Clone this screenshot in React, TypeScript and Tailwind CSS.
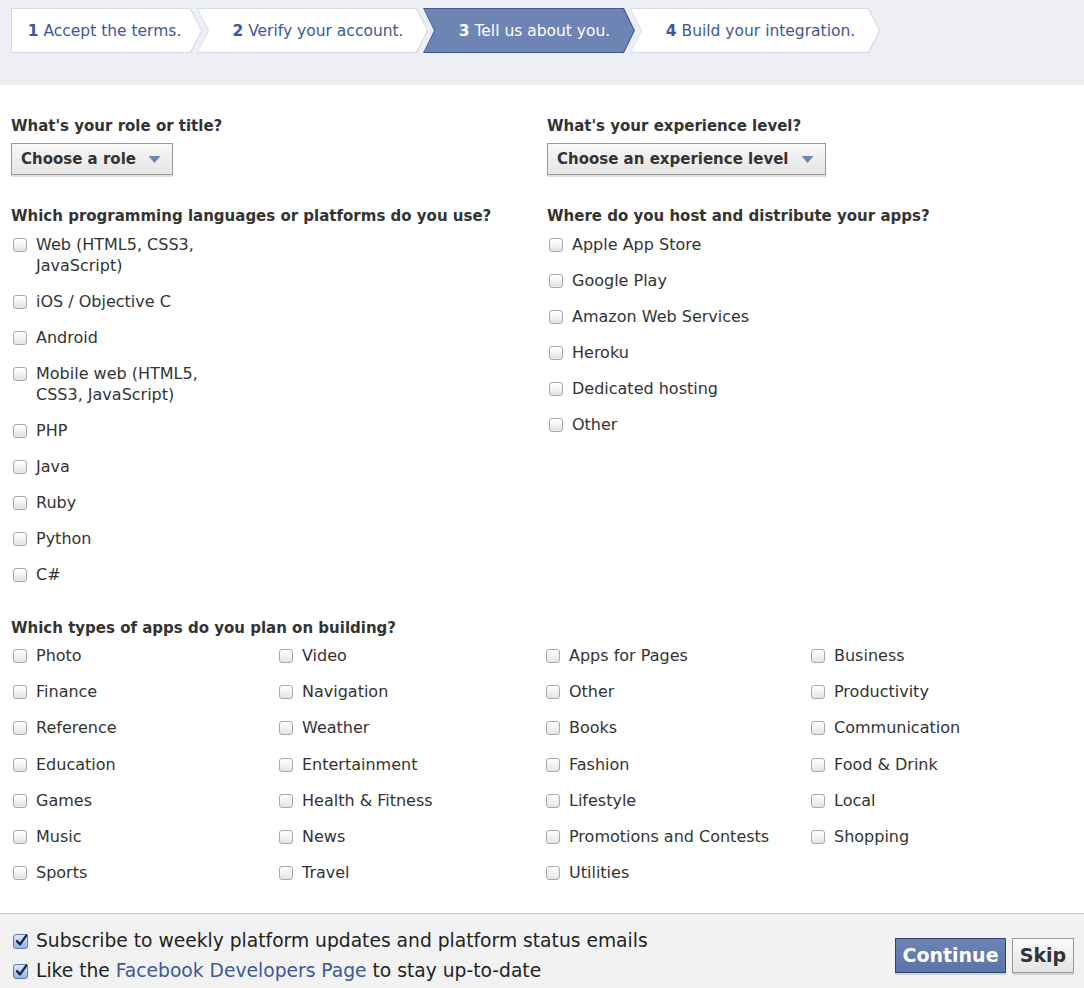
const font = "font-['DejaVu_Sans',sans-serif]";

const steps = [
  { n: "1", label: "Accept the terms.", w: "w-[191px]", first: true },
  { n: "2", label: "Verify your account.", w: "w-[231px]" },
  { n: "3", label: "Tell us about you.", w: "w-[212px]", active: true },
  { n: "4", label: "Build your integration.", w: "w-[250px]" },
];

const languages = [
  "Web (HTML5, CSS3, JavaScript)",
  "iOS / Objective C",
  "Android",
  "Mobile web (HTML5, CSS3, JavaScript)",
  "PHP",
  "Java",
  "Ruby",
  "Python",
  "C#",
];

const hosts = [
  "Apple App Store",
  "Google Play",
  "Amazon Web Services",
  "Heroku",
  "Dedicated hosting",
  "Other",
];

const appTypes = [
  "Photo", "Video", "Apps for Pages", "Business",
  "Finance", "Navigation", "Other", "Productivity",
  "Reference", "Weather", "Books", "Communication",
  "Education", "Entertainment", "Fashion", "Food & Drink",
  "Games", "Health & Fitness", "Lifestyle", "Local",
  "Music", "News", "Promotions and Contests", "Shopping",
  "Sports", "Travel", "Utilities",
];

function Step({ n, label, w, first, active }: { n: string; label: string; w: string; first?: boolean; active?: boolean }) {
  const shape = first
    ? "[clip-path:polygon(0_0,calc(100%-11px)_0,100%_50%,calc(100%-11px)_100%,0_100%)]"
    : "[clip-path:polygon(0_0,calc(100%-11px)_0,100%_50%,calc(100%-11px)_100%,0_100%,11px_50%)]";
  return (
    <div className={`${w} h-[45px] p-px ${shape} ${active ? "bg-[#3b5998]" : "bg-[#d4dbe8]"} ${first ? "" : "-ml-[5px]"}`}>
      <div
        className={`flex h-full items-center justify-center pt-[3px] ${first ? "pr-[4px]" : "pl-[11px]"} ${shape} ${
          active ? "bg-[#6d84b4] text-white" : "bg-white text-[#3b5998]"
        } text-[15.5px]`}
      >
        <span className="font-bold">{n}</span>
        <span>&nbsp;{label}</span>
      </div>
    </div>
  );
}

function Box() {
  return (
    <span className="mt-[4px] h-[14px] w-[14px] shrink-0 rounded-[3px] border border-[#a9a9a9] bg-gradient-to-b from-white to-[#e4e4e4]" />
  );
}

function CheckedBox() {
  return (
    <span className="relative mt-[1px] h-[15px] w-[15px] shrink-0 rounded-[3px] border border-[#5f7fb3] bg-gradient-to-b from-[#dbe8fb] to-[#8fb4ea]">
      <svg viewBox="0 0 14 14" className="absolute -top-[2px] left-0 h-[15px] w-[15px]">
        <path d="M2.8 7.6 L5.6 10.6 L11.6 2.2" fill="none" stroke="#1b2640" strokeWidth="2.2" strokeLinecap="round" strokeLinejoin="round" />
      </svg>
    </span>
  );
}

function Item({ label, narrow }: { label: string; narrow?: boolean }) {
  return (
    <div className="flex items-start gap-[9px] pl-[2px]">
      <Box />
      <span className={`text-[16px] leading-[21px] text-[#333] ${narrow ? "max-w-[180px]" : ""}`}>{label}</span>
    </div>
  );
}

function Select({ label }: { label: string }) {
  return (
    <div className="inline-flex h-[32px] items-center gap-[12px] border border-[#999] bg-gradient-to-b from-[#f8f8f8] to-[#e5e5e5] pl-[9px] pr-[11px] shadow-[0_2px_0_#e2e2e2]">
      <span className="text-[15px] font-bold text-[#333]">{label}</span>
      <svg viewBox="0 0 12 7" className="h-[7px] w-[13px]">
        <path d="M0 0 H12 L6 7 Z" fill="#6d84b4" />
      </svg>
    </div>
  );
}

export default function App() {
  return (
    <div className={`${font} w-[1084px] bg-white`}>
      <div className="h-[85px] bg-[#edeff4] pl-[11px] pt-[8px]">
        <div className="flex">
          {steps.map((s) => (
            <Step key={s.n} {...s} />
          ))}
        </div>
      </div>

      <div className="px-[11px] pt-[31px]">
        <div className="grid grid-cols-[536px_1fr]">
          <div>
            <h3 className="text-[15px] font-bold leading-[20px] text-[#333]">What's your role or title?</h3>
            <div className="mt-[7px]">
              <Select label="Choose a role" />
            </div>
          </div>
          <div>
            <h3 className="text-[15px] font-bold leading-[20px] text-[#333]">What's your experience level?</h3>
            <div className="mt-[7px]">
              <Select label="Choose an experience level" />
            </div>
          </div>
        </div>

        <div className="mt-[31px] grid grid-cols-[536px_1fr]">
          <div>
            <h3 className="text-[15px] font-bold leading-[20px] text-[#333]">
              Which programming languages or platforms do you use?
            </h3>
            <div className="mt-[8px] flex flex-col gap-[15px]">
              {languages.map((l) => (
                <Item key={l} label={l} narrow />
              ))}
            </div>
          </div>
          <div>
            <h3 className="text-[15px] font-bold leading-[20px] text-[#333]">
              Where do you host and distribute your apps?
            </h3>
            <div className="mt-[8px] flex flex-col gap-[15px]">
              {hosts.map((l) => (
                <Item key={l} label={l} />
              ))}
            </div>
          </div>
        </div>

        <h3 className="mt-[33px] text-[15px] font-bold leading-[20px] text-[#333]">
          Which types of apps do you plan on building?
        </h3>
        <div className="mt-[7px] grid grid-cols-[266px_267px_265px_1fr] gap-y-[15.2px] pb-[30px]">
          {appTypes.map((a, i) => (
            <Item key={i} label={a} />
          ))}
        </div>
      </div>

      <div className="flex h-[75px] items-start justify-between border-t border-[#c8c8c8] bg-[#f2f2f2] pl-[13px] pr-[10px] pt-[12px]">
        <div className="text-[18.7px] leading-[30px] text-[#222]">
          <div className="flex items-center gap-[8px]">
            <CheckedBox />
            <span>Subscribe to weekly platform updates and platform status emails</span>
          </div>
          <div className="flex items-center gap-[8px]">
            <CheckedBox />
            <span>
              Like the <a className="text-[#3b5998]">Facebook Developers Page</a> to stay up-to-date
            </span>
          </div>
        </div>
        <div className="mt-[12px] flex gap-[6px]">
          <button className="h-[35px] w-[111px] border border-[#29447e] bg-gradient-to-b from-[#6d84b4] to-[#5b74a8] text-[19px] font-bold text-white shadow-[0_2px_0_#d2d2d2]">
            Continue
          </button>
          <button className="h-[35px] w-[62px] border border-[#999] bg-gradient-to-b from-[#fafafa] to-[#e4e4e4] text-[19px] font-bold text-[#333] shadow-[0_2px_0_#d2d2d2]">
            Skip
          </button>
        </div>
      </div>
    </div>
  );
}
